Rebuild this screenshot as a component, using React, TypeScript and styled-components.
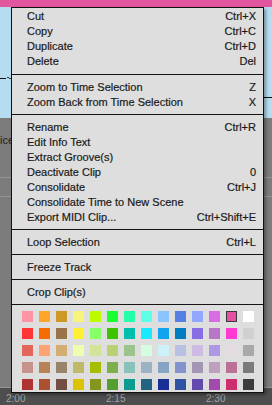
import React from 'react';
import styled, { createGlobalStyle } from 'styled-components';

const GlobalStyle = createGlobalStyle`
  html, body {
    margin: 0;
    padding: 0;
    background: #7d7d7d;
  }
  body {
    font-family: 'Liberation Sans', Arial, sans-serif;
  }
`;

const Page = styled.div`
  position: relative;
  width: 272px;
  height: 405px;
  overflow: hidden;
  display: flex;
  flex-direction: column;
  background: #7d7d7d;
`;

const TopBar = styled.div`
  height: 7px;
  background: #e2559f;
`;

const ClipArea = styled.div`
  height: 111px;
  background: #b6dcef;
  display: flex;
`;

const TrackArea = styled.div`
  flex: 1;
  display: flex;
  flex-direction: column;
`;

const TrackRow = styled.div<{ $h?: number }>`
  height: ${(p) => (p.$h ? `${p.$h}px` : 'auto')};
  flex: ${(p) => (p.$h ? 'none' : '1')};
  border-bottom: 1px solid #959595;
  background: #7c7c7c;
  display: flex;
  align-items: flex-start;
`;

const TrackLabel = styled.span`
  margin-top: 16px;
  font-size: 11px;
  color: #1c1c1c;
`;

const Ruler = styled.div`
  height: 17px;
  background: #4e4e4e;
  display: flex;
  align-items: flex-end;
  padding-left: 4px;
  gap: 80px;
`;

const Time = styled.span`
  display: flex;
  align-items: flex-end;
  gap: 2px;
  font-size: 10px;
  line-height: 12px;
  color: #a5a5a5;
  width: 20px;

  &::before {
    content: '';
    width: 1px;
    height: 11px;
    background: #a5a5a5;
  }
`;

const Menu = styled.div`
  position: absolute;
  left: 11px;
  top: 7px;
  width: 251px;
  border: 1px solid #111;
  background: #dedede;
  box-shadow: 2px 2px 3px rgba(0, 0, 0, 0.35);
  display: flex;
  flex-direction: column;
`;

const Group = styled.div<{ $first?: boolean }>`
  padding: ${(p) => (p.$first ? '1px 0 5px' : '5px 0 4px')};
  border-bottom: 1px solid #141414;
  display: flex;
  flex-direction: column;
`;

const Item = styled.div`
  height: 15px;
  line-height: 15px;
  padding: 0 7px 0 15px;
  display: flex;
  justify-content: space-between;
  font-size: 11px;
  color: #1a1a1a;
  -webkit-text-stroke: 0.2px #1a1a1a;
  white-space: nowrap;
`;

const Shortcut = styled.span`
  color: #1a1a1a;
`;

const Palette = styled.div`
  padding: 6px 0 2px;
  display: grid;
  grid-template-columns: repeat(14, 11px);
  grid-auto-rows: 11px;
  column-gap: 6px;
  row-gap: 6px;
  justify-content: center;
`;

const Swatch = styled.div<{ $c: string; $sel?: boolean }>`
  background: ${(p) => p.$c};
  box-sizing: border-box;
  border: ${(p) => (p.$sel ? '1px solid #3a3a3a' : 'none')};
`;

const groups: [string, string][][] = [
  [
    ['Cut', 'Ctrl+X'],
    ['Copy', 'Ctrl+C'],
    ['Duplicate', 'Ctrl+D'],
    ['Delete', 'Del'],
  ],
  [
    ['Zoom to Time Selection', 'Z'],
    ['Zoom Back from Time Selection', 'X'],
  ],
  [
    ['Rename', 'Ctrl+R'],
    ['Edit Info Text', ''],
    ['Extract Groove(s)', ''],
    ['Deactivate Clip', '0'],
    ['Consolidate', 'Ctrl+J'],
    ['Consolidate Time to New Scene', ''],
    ['Export MIDI Clip...', 'Ctrl+Shift+E'],
  ],
  [['Loop Selection', 'Ctrl+L']],
  [['Freeze Track', '']],
  [['Crop Clip(s)', '']],
];

const colors = [
  '#FF94A6', '#FFA529', '#CC9927', '#F7F47C', '#BFFB00', '#1AFF2F', '#25FFA8',
  '#5CFFE8', '#8BC5FF', '#5480E4', '#92A7FF', '#D86CE4', '#E553A0', '#FFFFFF',
  '#FF3636', '#F66C03', '#99724B', '#FFF034', '#87FF67', '#3DC300', '#00BFAF',
  '#19E9FF', '#10A4EE', '#007DC0', '#886CE4', '#B677C6', '#FF39D4', '#D0D0D0',
  '#E2675A', '#FFA374', '#D3AD71', '#EDFFAE', '#D2E498', '#BAD074', '#9BC48D',
  '#D4FDE1', '#CDF1F8', '#B9C1E3', '#CDBBE4', '#AE98E5', '#E5DCE1', '#A9A9A9',
  '#C6928B', '#B78256', '#99836A', '#BFBA69', '#A6BE00', '#7DB04D', '#88C2BA',
  '#9BB3C4', '#85A5C2', '#8393CC', '#A595B5', '#BF9FBE', '#BC7196', '#7B7B7B',
  '#AF3333', '#A95131', '#724F41', '#DBC300', '#85961F', '#539F31', '#0A9C8E',
  '#236384', '#1A2F96', '#2F52A2', '#624BAD', '#A34BAD', '#CC2E6E', '#3C3C3C',
];

const Envelope = () => (
  <svg width="272" height="111" viewBox="0 0 272 111">
    <path d="M0 71.5H6" stroke="#111" strokeWidth="1" />
    <path d="M7 70.5h2M9 71.5h2" stroke="#333" strokeWidth="1" />
    <path d="M263 90.5H272" stroke="#111" strokeWidth="1" />
  </svg>
);

const App = () => {
  return (
    <>
      <GlobalStyle />
      <Page>
        <TopBar />
        <ClipArea>
          <Envelope />
        </ClipArea>
        <TrackArea>
          <TrackRow $h={59}>
            <TrackLabel>ice</TrackLabel>
          </TrackRow>
          <TrackRow $h={18} />
          <TrackRow />
        </TrackArea>
        <Ruler>
          <Time>2:00</Time>
          <Time>2:15</Time>
          <Time>2:30</Time>
        </Ruler>
        <Menu>
          {groups.map((g, gi) => (
            <Group key={gi} $first={gi === 0}>
              {g.map(([label, key]) => (
                <Item key={label}>
                  <span>{label}</span>
                  <Shortcut>{key}</Shortcut>
                </Item>
              ))}
            </Group>
          ))}
          <Palette>
            {colors.map((c, i) => (
              <Swatch key={i} $c={c} $sel={i === 12} />
            ))}
          </Palette>
        </Menu>
      </Page>
    </>
  );
};

export default App;
